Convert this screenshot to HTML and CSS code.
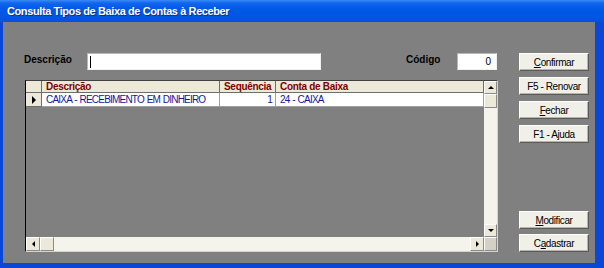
FILE: index.html
```html
<!DOCTYPE html>
<html lang="pt">
<head>
<meta charset="utf-8">
<title>Consulta Tipos de Baixa de Contas à Receber</title>
<link rel="stylesheet" href="styles.css">
</head>
<body>
<div class="window">
  <div class="titlebar"><span class="title">Consulta Tipos de Baixa de Contas à Receber</span></div>
  <div class="client">
    <div class="main">
      <div class="filters">
        <span class="lbl lbl-desc">Descrição</span>
        <div class="input input-desc"><span class="caret"></span></div>
        <span class="lbl lbl-cod">Código</span>
        <div class="input input-cod">0</div>
      </div>
      <div class="grid">
        <div class="view">
          <div class="row head">
            <div class="cell ind"></div>
            <div class="cell">Descrição</div>
            <div class="cell">Sequência</div>
            <div class="cell">Conta de Baixa</div>
          </div>
          <div class="row data">
            <div class="cell ind"><span class="pointer"></span></div>
            <div class="cell">CAIXA - RECEBIMENTO EM DINHEIRO</div>
            <div class="cell num">1</div>
            <div class="cell">24 - CAIXA</div>
          </div>
        </div>
        <div class="vscroll">
          <div class="sbtn"><span class="arr up"></span></div>
          <div class="sthumb"></div>
          <div class="strack"></div>
          <div class="sbtn"><span class="arr down"></span></div>
        </div>
        <div class="hscroll">
          <div class="sbtn"><span class="arr left"></span></div>
          <div class="sthumb"></div>
          <div class="strack"></div>
          <div class="sbtn"><span class="arr right"></span></div>
        </div>
        <div class="corner"></div>
      </div>
    </div>
    <div class="buttons">
      <div class="btn"><span><u>C</u>onfirmar</span></div>
      <div class="btn"><span>F5 - Renovar</span></div>
      <div class="btn"><span><u>F</u>echar</span></div>
      <div class="btn"><span>F1 - Ajuda</span></div>
      <div class="btn btn-bottom"><span><u>M</u>odificar</span></div>
      <div class="btn"><span>C<u>a</u>dastrar</span></div>
    </div>
  </div>
</div>
</body>
</html>
```

FILE: styles.css
```css
* { box-sizing: border-box; }
body {
  margin: 0;
  width: 604px;
  height: 268px;
  overflow: hidden;
  font-family: "Liberation Sans", Arial, sans-serif;
  font-size: 10px;
}
.window {
  width: 604px;
  height: 268px;
  background: #0a46d8;
  display: flex;
  flex-direction: column;
}
.titlebar {
  height: 22px;
  background: linear-gradient(to bottom, #3a8bf6 0px, #1166ee 3px, #0058e6 9px, #0055e3 18px, #0a4ed6 22px);
  display: flex;
  align-items: center;
  padding-left: 7px;
}
.title {
  color: #fff;
  font-weight: bold;
  font-size: 11px;
  letter-spacing: -0.4px;
  text-shadow: 1px 1px 0 #0a2f90;
}
.client {
  margin-left: 3px;
  width: 592px;
  height: 241px;
  background: #808080;
  display: flex;
  padding: 31px 6px 11px 21px;
  gap: 21px;
}
.main {
  width: 474px;
  display: flex;
  flex-direction: column;
}
.filters {
  display: flex;
  align-items: center;
  height: 17px;
  margin-bottom: 10px;
}
.lbl {
  font-weight: bold;
  font-size: 10px;
  color: #000;
  margin-top: -4px;
}
.lbl-desc { width: 63px; }
.lbl-cod { margin-left: 85px; width: 51px; }
.input {
  height: 17px;
  background: #fff;
  border: 1px solid;
  border-color: #b8b8b8 #f0f0f0 #f0f0f0 #b8b8b8;
}
.input-desc {
  width: 234px;
  padding: 2px 0 0 2px;
}
.caret {
  display: block;
  width: 1px;
  height: 12px;
  background: #000;
}
.input-cod {
  width: 40px;
  text-align: right;
  padding-right: 5px;
  line-height: 15px;
}
.grid {
  margin-left: 1px;
  flex: 1;
  display: grid;
  grid-template-columns: 458px 13px;
  grid-template-rows: 1fr 14px;
  border-left: 1px solid #000;
  border-top: 1px solid #404040;
  border-right: 1px solid #d8d6cc;
  border-bottom: 1px solid #d8d6cc;
}
.view {
  background: #808080;
  overflow: hidden;
}
.row {
  display: grid;
  grid-template-columns: 16px 178px 56px 208px;
}
.cell {
  border-right: 1px solid #808080;
  border-bottom: 1px solid #808080;
  padding-left: 4px;
  white-space: nowrap;
  overflow: hidden;
}
.head { height: 12px; }
.head .cell {
  background: #ece9d8;
  color: #800000;
  font-weight: bold;
  letter-spacing: -0.3px;
  line-height: 11px;
  border-color: #6e6e6e;
}
.data { height: 14px; }
.data .cell {
  background: #fff;
  color: #16169a;
  letter-spacing: -0.8px;
  word-spacing: 0.8px;
  line-height: 13px;
  border-color: #a0a0a0;
}
.data .cell.ind {
  background: #ece9d8;
  border-color: #6e6e6e;
  padding-left: 6px;
  padding-top: 3px;
}
.pointer {
  display: block;
  width: 0;
  height: 0;
  border-top: 4px solid transparent;
  border-bottom: 4px solid transparent;
  border-left: 4px solid #000;
}
.num {
  text-align: right;
  padding-right: 3px;
}
.vscroll {
  display: flex;
  flex-direction: column;
  background: #f4f3ec;
}
.hscroll {
  display: flex;
  background: #f4f3ec;
}
.sbtn, .sthumb {
  width: 13px;
  height: 13px;
  flex: none;
  background: #ece9d8;
  border: 1px solid;
  border-color: #fff #8a8a8a #8a8a8a #fff;
  display: flex;
  align-items: center;
  justify-content: center;
}
.hscroll .sbtn, .hscroll .sthumb { width: 14px; height: 14px; }
.vscroll .sthumb { height: 14px; }
.strack { flex: 1; }
.arr { width: 0; height: 0; }
.arr.up { border-left: 3px solid transparent; border-right: 3px solid transparent; border-bottom: 3px solid #000; }
.arr.down { border-left: 3px solid transparent; border-right: 3px solid transparent; border-top: 3px solid #000; }
.arr.left { border-top: 3px solid transparent; border-bottom: 3px solid transparent; border-right: 3px solid #000; }
.arr.right { border-top: 3px solid transparent; border-bottom: 3px solid transparent; border-left: 3px solid #000; }
.corner {
  background: #d4d0c8;
  border: 1px solid;
  border-color: #fff #8a8a8a #8a8a8a #fff;
}
.buttons {
  width: 70px;
  display: flex;
  flex-direction: column;
  gap: 6px;
}
.btn {
  height: 18px;
  flex: none;
  background: #f0efe8;
  border: 1px solid;
  border-color: #fff #5a5a5a #5a5a5a #fff;
  box-shadow: inset -1px -1px 0 #b8b6ac;
  display: flex;
  align-items: center;
  justify-content: center;
  color: #000;
  font-size: 10px;
  letter-spacing: -0.4px;
}
.btn-bottom { margin-top: auto; }
.btn-bottom + .btn { margin-top: -1px; }
```
